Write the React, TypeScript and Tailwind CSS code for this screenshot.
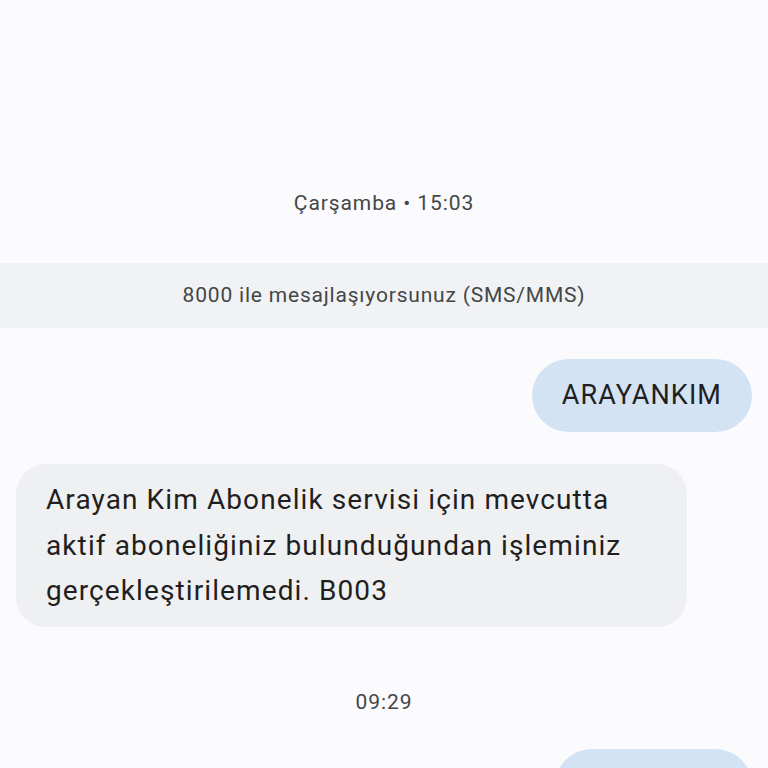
export default function App() {
  return (
    <main
      className="h-[768px] w-[768px] overflow-hidden bg-[#fbfbfe] text-[#1f1f1f]"
      style={{ fontFamily: "Roboto, 'Noto Sans', sans-serif" }}
    >
      <div className="flex flex-col pt-[189px]">
        <p className="text-center text-[21px] leading-[28px] tracking-[0.9px] text-[#444746]">
          Çarşamba • 15:03
        </p>

        <div className="mt-[46px] flex h-[65px] items-center justify-center bg-[#f1f2f5] text-[21px] tracking-[0.8px] text-[#444746]">
          8000 ile mesajlaşıyorsunuz (SMS/MMS)
        </div>

        <div className="mt-[31px] flex justify-end pr-4">
          <div className="flex h-[73px] items-center rounded-[37px] bg-[#d3e3f4] px-[30px] text-[27px] tracking-[1.1px]">
            ARAYANKIM
          </div>
        </div>

        <div className="mt-[32px] flex pl-4">
          <div className="w-[671px] rounded-[30px] bg-[#eff0f2] px-[30px] py-[13px] text-[28px] leading-[45.5px] tracking-[1.1px]">
            Arayan Kim Abonelik servisi için mevcutta aktif aboneliğiniz bulunduğundan işleminiz gerçekleştirilemedi. B003
          </div>
        </div>

        <p className="mt-[61px] text-center text-[21px] leading-[28px] tracking-[0.9px] text-[#444746]">
          09:29
        </p>

        <div className="mt-[33px] flex justify-end pr-4">
          <div className="flex h-[73px] w-[197px] items-center rounded-[37px] bg-[#d3e3f4]" />
        </div>
      </div>
    </main>
  );
}
